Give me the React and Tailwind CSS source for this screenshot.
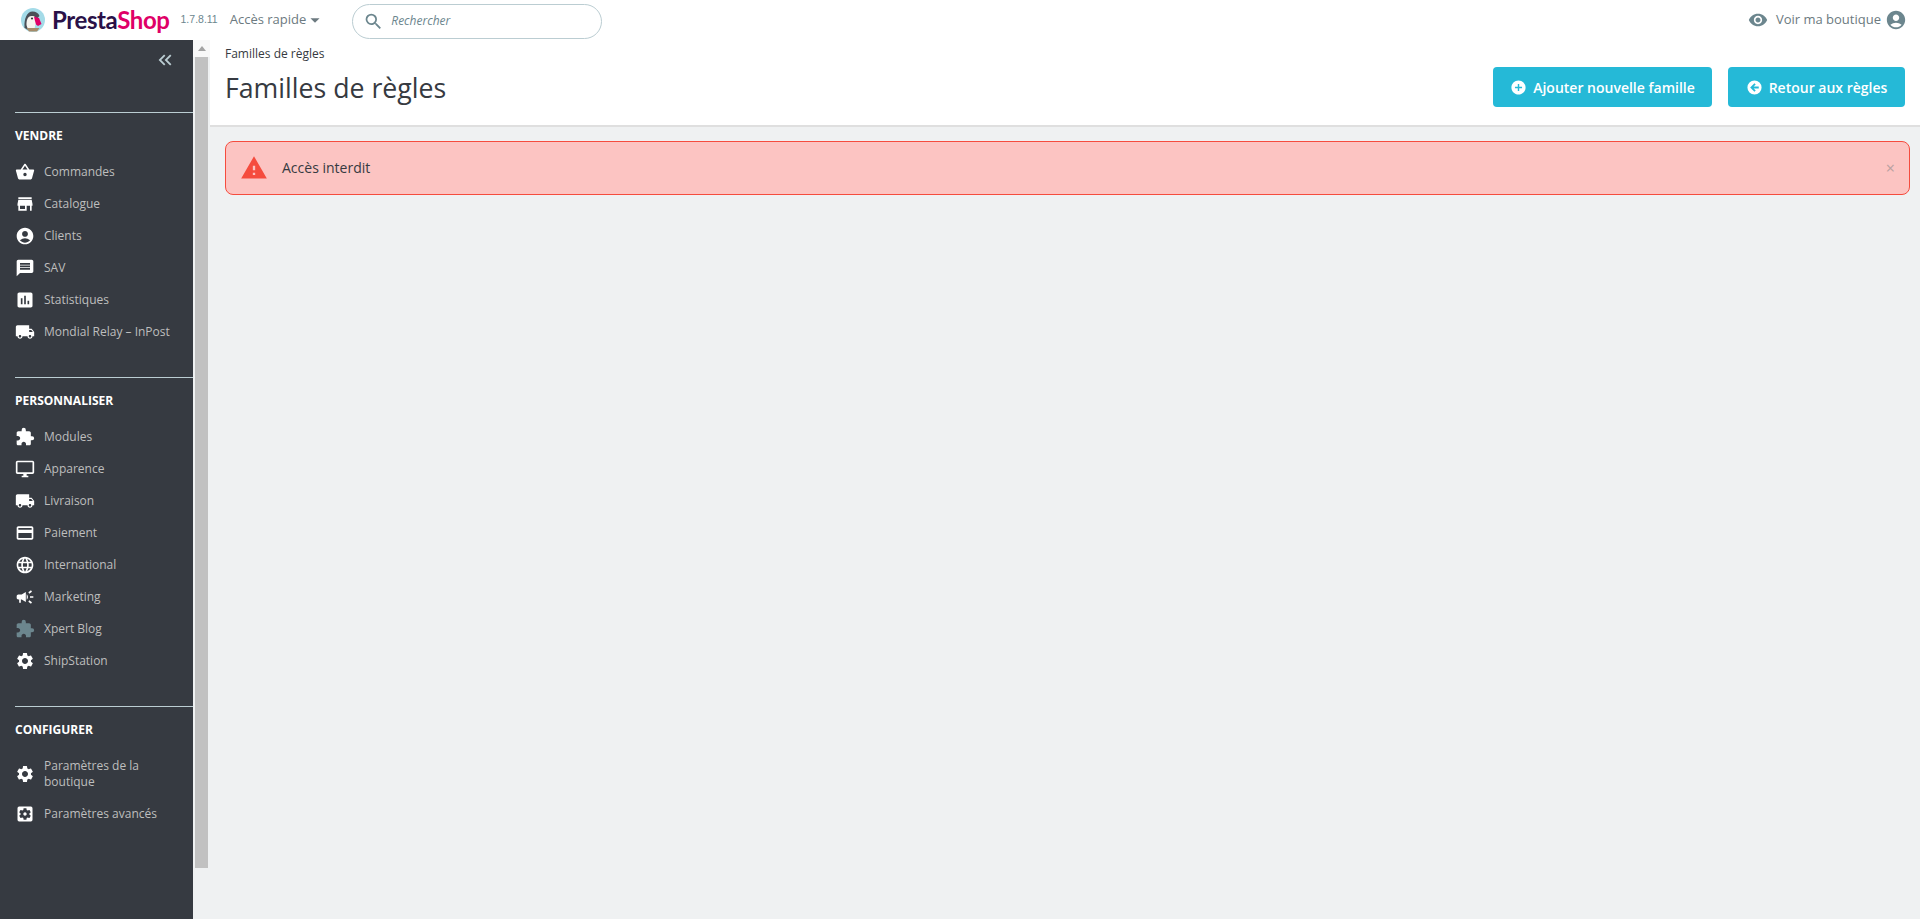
import React from 'react';
import {
  MdShoppingBasket,
  MdStore,
  MdAccountCircle,
  MdMessage,
  MdAssessment,
  MdLocalShipping,
  MdExtension,
  MdOutlineDesktopWindows,
  MdCreditCard,
  MdLanguage,
  MdCampaign,
  MdSettings,
  MdSettingsApplications,
  MdVisibility,
  MdSearch,
  MdArrowDropDown,
  MdAddCircle,
  MdWarning,
  MdKeyboardDoubleArrowLeft,
} from 'react-icons/md';

const sections = [
  {
    title: 'Vendre',
    items: [
      { icon: MdShoppingBasket, label: 'Commandes' },
      { icon: MdStore, label: 'Catalogue' },
      { icon: MdAccountCircle, label: 'Clients' },
      { icon: MdMessage, label: 'SAV' },
      { icon: MdAssessment, label: 'Statistiques' },
      { icon: MdLocalShipping, label: 'Mondial Relay – InPost' },
    ],
  },
  {
    title: 'Personnaliser',
    items: [
      { icon: MdExtension, label: 'Modules' },
      { icon: MdOutlineDesktopWindows, label: 'Apparence' },
      { icon: MdLocalShipping, label: 'Livraison' },
      { icon: MdCreditCard, label: 'Paiement' },
      { icon: MdLanguage, label: 'International' },
      { icon: MdCampaign, label: 'Marketing' },
      { icon: MdExtension, label: 'Xpert Blog', muted: true },
      { icon: MdSettings, label: 'ShipStation' },
    ],
  },
  {
    title: 'Configurer',
    items: [
      { icon: MdSettings, label: 'Paramètres de la boutique', tall: true },
      { icon: MdSettingsApplications, label: 'Paramètres avancés' },
    ],
  },
];

function Logo() {
  return (
    <div className="flex items-center gap-[7px]">
      <svg width="24" height="24" viewBox="0 0 24 24">
        <circle cx="12" cy="12" r="12" fill="#a4dbe8" />
        <path d="M3.5 19C3 11 6 3.5 11.5 3.5c3.5 0 6 1.5 7 4.5l-3 3-3 8-3 3c-3 0-5-1-6.500-3z" fill="#4a4f57" />
        <path d="M5.500 17c0-4 .5-8.500 5-9 3.500-.5 5 2 5 4.500l-2 8-3 2c-2.500 0-4.500-2-5-5.500z" fill="#f6f4ef" />
        <path d="M13 8.500l5 1.500 2.500 6-3.500 2-2-1.500-1-3.500z" fill="#df0067" />
        <circle cx="11" cy="10.500" r="1.100" fill="#363a41" />
        <path d="M5.500 20h13l-2.500 3.500H8z" fill="#a58c6a" />
      </svg>
      <span className="font-['Lato',sans-serif] text-[24px] leading-none font-bold tracking-[-0.4px] whitespace-nowrap">
        <span className="text-[#2a1148]">Presta</span>
        <span className="text-[#df0067]">Shop</span>
      </span>
    </div>
  );
}

function Header() {
  return (
    <header className="flex h-10 items-center bg-white">
      <div className="ml-[21px]">
        <Logo />
      </div>
      <span className="ml-[11px] font-['Liberation_Sans',sans-serif] text-[10.5px] text-[#6c868e]">1.7.8.11</span>
      <button className="ml-[12px] flex items-center text-[13px] text-[#6c7a80]">
        Accès rapide
        <MdArrowDropDown className="ml-[-2px] text-[22px]" />
      </button>
      <div className="ml-[26px] mt-[2px] flex h-[35px] w-[250px] items-center rounded-full border border-[#bbcdd2] pl-[10px]">
        <MdSearch className="text-[21px] text-[#6c868e]" />
        <span className="ml-[7px] text-[12px] text-[#6c868e] italic">Rechercher</span>
      </div>
      <div className="ml-auto mr-[13px] flex items-center">
        <MdVisibility className="text-[20px] text-[#6c868e]" />
        <span className="ml-[8px] text-[13px] text-[#6c7a80]">Voir ma boutique</span>
        <MdAccountCircle className="ml-[4px] text-[22px] text-[#6c868e]" />
      </div>
    </header>
  );
}

function NavItem({ item }) {
  const Icon = item.icon;
  return (
    <li className={`flex items-center pl-[15px] pr-4 ${item.tall ? 'h-12' : 'h-8'}`}>
      <Icon className={`w-5 h-5 shrink-0 ${item.muted ? 'text-[#6c868e]' : 'text-white'}`} size={20} />
      <span className="ml-[9px] text-[12px] leading-4 text-[#bebebe]">{item.label}</span>
    </li>
  );
}

function Sidebar() {
  return (
    <aside className="w-[193px] shrink-0 bg-[#363a41]">
      <div className="flex h-[72px] justify-end pr-[17px] pt-[9px]">
        <MdKeyboardDoubleArrowLeft className="text-[22px] text-[#bbcdd2]" />
      </div>
      <nav>
        {sections.map((section) => (
          <div key={section.title} className="ml-[15px] border-t border-[#bbcdd2] pb-[29px] last:pb-0">
            <h3 className="flex h-[43px] items-center pt-[2px] text-[12px] font-bold text-white uppercase">
              {section.title}
            </h3>
            <ul className="-ml-[15px]">
              {section.items.map((item) => (
                <NavItem key={item.label} item={item} />
              ))}
            </ul>
          </div>
        ))}
      </nav>
    </aside>
  );
}

function Scrollbar() {
  return (
    <div className="w-[17px] shrink-0 bg-[#eff1f2]">
      <div className="flex h-[17px] justify-center bg-[#f8f8f8] pt-[6px]">
        <div className="h-0 w-0 border-x-4 border-b-[5px] border-x-transparent border-b-[#a3a3a3]" />
      </div>
      <div className="ml-[2px] h-[811px] w-[13px] bg-[#c1c1c1]" />
    </div>
  );
}

export default function App() {
  return (
    <div className="flex h-[919px] flex-col overflow-hidden bg-[#eff1f2] font-['Open_Sans',sans-serif] text-[#363a41]">
      <Header />
      <div className="flex min-h-0 flex-1">
        <Sidebar />
        <Scrollbar />
        <main className="min-w-0 flex-1">
          <div className="flex h-[87px] items-start justify-between border-b-2 border-[#dfdfdf] bg-white pl-[15px] pr-[15px]">
            <div>
              <div className="pt-[6px] text-[12px] leading-4">Familles de règles</div>
              <h1 className="mt-[7px] text-[26.7px] leading-[38px] font-normal">Familles de règles</h1>
            </div>
            <div className="mt-[27px] flex gap-4">
              <button className="flex h-10 w-[219px] items-center justify-center gap-[6px] rounded bg-[#25b9d7] text-[14px] font-semibold text-white">
                <MdAddCircle className="text-[17px]" />
                Ajouter nouvelle famille
              </button>
              <button className="flex h-10 w-[177px] items-center justify-center gap-[6px] rounded bg-[#25b9d7] text-[14px] font-semibold text-white">
                <svg width="17" height="17" viewBox="0 0 24 24" fill="currentColor">
                  <path
                    fillRule="evenodd"
                    d="M12 2a10 10 0 1 0 0 20 10 10 0 0 0 0-20zm6 11.4h-7.2l2.9 2.9-1.8 1.8L5.9 12l6-6.100 1.800 1.800-2.900 2.900H18z"
                  />
                </svg>
                Retour aux règles
              </button>
            </div>
          </div>
          <div className="mx-[15px] mr-[10px] mt-[14px] flex h-[54px] items-center rounded-lg border border-[#f54c3e] bg-[#fcc4c2] pl-[14px] pr-[14px]">
            <MdWarning className="text-[28px] text-[#f54c3e]" />
            <span className="ml-[14px] -mt-[2px] text-[14px]">Accès interdit</span>
            <span className="ml-auto text-[16px] leading-none text-[#b9a0a0]">×</span>
          </div>
        </main>
      </div>
    </div>
  );
}
